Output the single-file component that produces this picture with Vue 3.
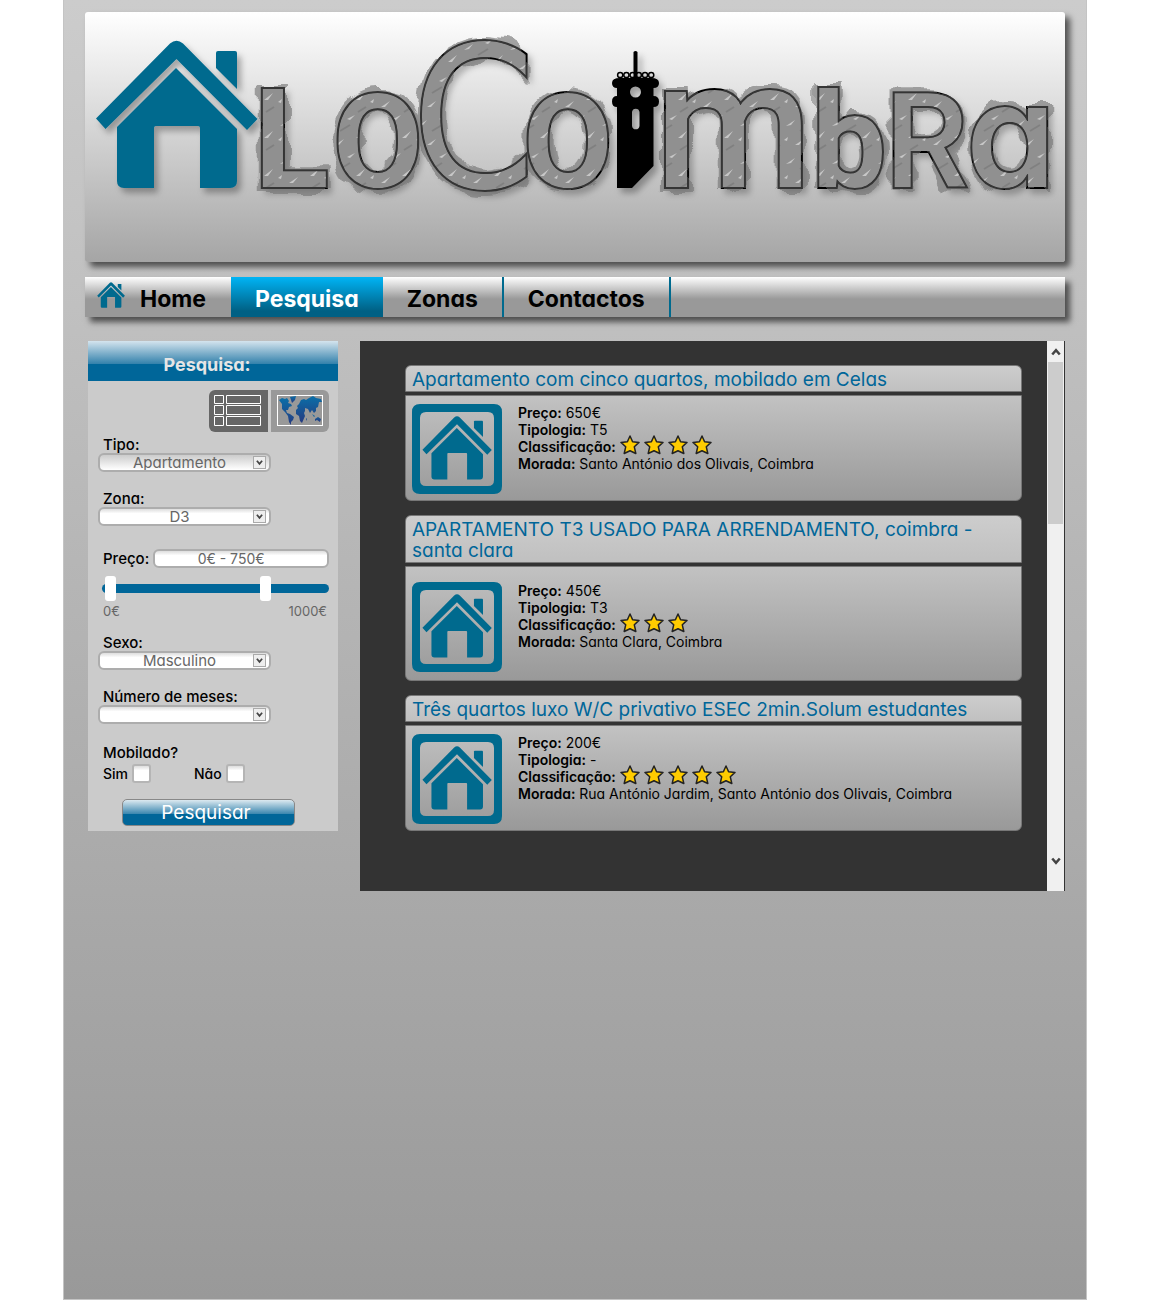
<script setup>
import { ref, computed } from 'vue'

const menu = ['Pesquisa', 'Zonas', 'Contactos']
const view = ref('lista')
const minPrice = ref(0)
const maxPrice = ref(750)
const priceRange = computed(() => `${minPrice.value}€ - ${maxPrice.value}€`)

const letters = [
  { t: 'L', x: 254, cls: 'l-cap' },
  { t: 'O', x: 333, cls: 'l-round' },
  { t: 'C', x: 412, cls: 'l-big' },
  { t: 'O', x: 523, cls: 'l-round' },
  { t: 'm', x: 655, cls: 'l-m' },
  { t: 'b', x: 812, cls: 'l-b' },
  { t: 'R', x: 885, cls: 'l-r' },
  { t: 'a', x: 966, cls: 'l-a' }
]

const results = [
  { title: 'Apartamento com cinco quartos, mobilado em Celas', price: '650€', type: 'T5', stars: 4, address: 'Santo António dos Olivais, Coimbra' },
  { title: 'APARTAMENTO T3 USADO PARA ARRENDAMENTO, coimbra - santa clara', price: '450€', type: 'T3', stars: 3, address: 'Santa Clara, Coimbra', tall: true },
  { title: 'Três quartos luxo W/C privativo ESEC 2min.Solum estudantes', price: '200€', type: '-', stars: 5, address: 'Rua António Jardim, Santo António dos Olivais, Coimbra' }
]
</script>

<template>
  <div class="page">
    <svg class="defs" aria-hidden="true">
      <symbol id="house" viewBox="95 40 163 149">
        <path d="M96 118.500L170 43.500Q176.500 38 183 43.500L257.500 119L247 130L176.500 59L105.500 129Z" />
        <path d="M176 68L237 129V181Q237 188 230 188H200V128Q200 126 198 126H156Q154 126 154 128V188H124Q117 188 117 181V127Z" />
        <path d="M216 53Q216 51 218 51H235Q237 51 237 53V89L216 68Z" />
      </symbol>
      <symbol id="chevron" viewBox="0 0 8 8">
        <path d="M1 2L4 5.500L7 2" fill="none" stroke="#444" stroke-width="2" />
      </symbol>
    </svg>

    <header class="banner">
      <svg class="logo" viewBox="85 12 980 250" role="img" aria-label="LoCoimbra">
        <defs>
          <pattern id="hatch" width="46" height="38" patternUnits="userSpaceOnUse">
            <rect width="46" height="38" fill="#929292" />
            <path d="M4 12L13 6L9 11ZM25 5L33 1L28 6ZM34 24L43 17L38 24ZM13 31L22 25L17 31ZM2 26L6 23L5 27Z" fill="#d0d0d0" />
            <path d="M18 17L28 11M36 36L44 31" stroke="#808080" stroke-width="2" />
          </pattern>
          <filter id="scribble" x="-5%" y="-15%" width="110%" height="135%">
            <feMorphology in="SourceAlpha" operator="dilate" radius="2" result="fat" />
            <feTurbulence type="fractalNoise" baseFrequency="0.06" numOctaves="1" seed="6" result="noise" />
            <feDisplacementMap in="fat" in2="noise" scale="20" xChannelSelector="R" yChannelSelector="G" result="rough" />
            <feFlood flood-color="#777" flood-opacity="0.6" />
            <feComposite in2="rough" operator="in" result="smudge" />
            <feDropShadow in="SourceGraphic" dx="4" dy="5" stdDeviation="3" flood-color="#000" flood-opacity="0.25" result="shadowed" />
            <feFlood flood-color="#888" flood-opacity="0.15" />
            <feComposite in2="rough" operator="in" result="veil" />
            <feMerge>
              <feMergeNode in="smudge" />
              <feMergeNode in="shadowed" />
              <feMergeNode in="veil" />
            </feMerge>
          </filter>
          <filter id="drop" x="-10%" y="-10%" width="125%" height="125%">
            <feDropShadow dx="4" dy="5" stdDeviation="3" flood-color="#000" flood-opacity="0.3" />
          </filter>
        </defs>
        <use class="blue" href="#house" x="95" y="40" width="163" height="149" filter="url(#drop)" />
        <g filter="url(#scribble)">
          <text v-for="(l, i) in letters" :key="i" :x="l.x" y="187" class="letter" :class="l.cls">{{ l.t }}</text>
        </g>
        <g filter="url(#drop)">
          <path d="M633.500 52Q635.500 50 637.500 52V78H651Q659 78 659 83T653.500 88V96Q659 96 659 101.500T653.500 107V166L632 188H617V107Q612 107 612 101.500T617 96V88Q612 88 612 83T620 78H633.500ZM641 92A5.500 5.500 0 1 0 630 92A5.500 5.500 0 1 0 641 92ZM632 112V126A3.800 4 0 0 0 639.500 126V112A3.800 4 0 0 0 632 112Z" fill-rule="evenodd" />
          <circle v-for="n in 6" :key="n" :cx="614 + n * 6.2" cy="75" r="2.600" fill="none" stroke="#000" stroke-width="1.500" />
        </g>
      </svg>
    </header>

    <nav class="menu">
      <a href="#" class="home"><svg class="home-icon blue" aria-hidden="true"><use href="#house" /></svg>Home</a>
      <a v-for="m in menu" :key="m" href="#" :class="{ active: m === 'Pesquisa' }">{{ m }}</a>
    </nav>

    <div class="columns">
      <form class="search" @submit.prevent>
        <h2>Pesquisa:</h2>
        <div class="fields">
          <div class="toggle">
            <button type="button" :class="{ on: view === 'lista' }" aria-label="Lista" @click="view = 'lista'">
              <svg width="48" height="32" viewBox="0 0 48 32" fill="none" stroke="#fff">
                <path d="M.5 .5h9v8h-9zM12.500 .5h34v8h-34zM.5 10.500h9v9h-9zM12.500 10.500h34v9h-34zM.5 21.500h9v9h-9zM12.500 21.500h34v9h-34z" />
              </svg>
            </button>
            <button type="button" :class="{ on: view === 'mapa' }" aria-label="Mapa" @click="view = 'mapa'">
              <svg width="46" height="32" viewBox="0 0 46 32">
                <defs>
                  <linearGradient id="sea" x2="0" y2="1"><stop stop-color="#0a6fa8" /><stop offset="1" stop-color="#263a80" /></linearGradient>
                </defs>
                <rect x=".5" y=".5" width="45" height="30" fill="none" stroke="#fff" />
                <g fill="url(#sea)">
                  <path d="M2 5L5 3L8 4L10 3L12 6L11 8L14 9L15 11L12 12L11 15L9 15L10 18L13 19L17 22L16 25L14 27V30L12 27L11 21L8 17L5 14L5 9Z" />
                  <path d="M13 2L19 1L18 5L15 8L14 5Z" />
                  <path d="M22 9L24 5L27 4L29 5L32 3L36 1L39 3L44 4L45 7L42 7L41 12L39 13L39 16L37 18L35 15L33 18L31 14L28 13L28 16L27 18L28 21L25 28L23 26L22 21L19 19V15L21 13L20 11Z" />
                  <path d="M38 24L41 22L44 24L43 27L40 25L38 26ZM35 19L38 21L37 22ZM29 23L30 24L29 26Z" />
                </g>
              </svg>
            </button>
          </div>

          <div class="field">
            <label for="tipo">Tipo:</label>
            <div class="pick">
              <select id="tipo" class="box shaded"><option>Apartamento</option></select>
              <svg aria-hidden="true"><use href="#chevron" /></svg>
            </div>
          </div>
          <div class="field">
            <label for="zona">Zona:</label>
            <div class="pick">
              <select id="zona" class="box"><option>D3</option></select>
              <svg aria-hidden="true"><use href="#chevron" /></svg>
            </div>
          </div>

          <div class="price">
            <label for="preco">Preço:</label>
            <input id="preco" class="box" type="text" :value="priceRange" readonly>
          </div>
          <div class="slider">
            <input v-model="minPrice" type="range" min="0" max="1000" aria-label="Preço mínimo">
            <input v-model="maxPrice" type="range" min="0" max="1000" aria-label="Preço máximo">
          </div>
          <div class="scale"><span>0€</span><span>1000€</span></div>

          <div class="field">
            <label for="sexo">Sexo:</label>
            <div class="pick">
              <select id="sexo" class="box"><option>Masculino</option></select>
              <svg aria-hidden="true"><use href="#chevron" /></svg>
            </div>
          </div>
          <div class="field">
            <label for="meses">Número de meses:</label>
            <div class="pick">
              <select id="meses" class="box"><option></option></select>
              <svg aria-hidden="true"><use href="#chevron" /></svg>
            </div>
          </div>

          <fieldset class="furnished">
            <legend>Mobilado?</legend>
            <div class="checks">
              <label>Sim <input type="checkbox"></label>
              <label>Não <input type="checkbox"></label>
            </div>
          </fieldset>
          <button class="submit" type="submit">Pesquisar</button>
        </div>
      </form>

      <main class="results">
        <div class="list">
          <article v-for="r in results" :key="r.title" class="card">
            <h3><a href="#">{{ r.title }}</a></h3>
            <div class="body" :class="{ tall: r.tall }">
              <svg class="thumb blue" viewBox="0 0 90 90" aria-hidden="true">
                <path fill-rule="evenodd" d="M8 0H82Q90 0 90 8V82Q90 90 82 90H8Q0 90 0 82V8Q0 0 8 0ZM14 8Q8 8 8 14V76Q8 82 14 82H76Q82 82 82 76V14Q82 8 76 8Z" />
                <use href="#house" x="10" y="12" width="70" height="64" />
              </svg>
              <div class="info">
                <p><b>Preço:</b> {{ r.price }}</p>
                <p><b>Tipologia:</b> {{ r.type }}</p>
                <p class="rating">
                  <b>Classificação:</b>
                  <svg v-for="s in r.stars" :key="s" viewBox="0 0 20 20" aria-hidden="true">
                    <path d="M10 1L12.600 6.800L19 7.400L14.300 11.800L15.800 18.500L10 15.800L4.200 18.500L5.700 11.800L1 7.400L7.400 6.800Z" />
                  </svg>
                </p>
                <p><b>Morada:</b> {{ r.address }}</p>
              </div>
            </div>
          </article>
        </div>
        <div class="scrollbar">
          <button type="button" aria-label="Subir"><svg class="up"><use href="#chevron" /></svg></button>
          <div class="grip"></div>
          <button type="button" class="down" aria-label="Descer"><svg><use href="#chevron" /></svg></button>
        </div>
      </main>
    </div>
  </div>
</template>

<style>
body { background: #fff; }
</style>

<style scoped>
* { box-sizing: border-box; }
.page {
  max-width: 1024px;
  min-height: 100vh;
  margin: 0 auto;
  padding: 12px 21px 0;
  border: solid #c4c4c4;
  border-width: 0 1px 1px;
  background: linear-gradient(#ccc, #999);
  font-family: Inter, "Open Sans", sans-serif;
  font-feature-settings: "cv11";
  font-size: 15px;
  color: #000;
}
.defs { position: absolute; width: 0; height: 0; }
.blue { fill: #006a8e; }
a { color: inherit; text-decoration: none; }
button { padding: 0; border: 0; font: inherit; cursor: pointer; }

.banner {
  border-radius: 3px;
  background: linear-gradient(#fff, #a5a5a5);
  box-shadow: 5px 5px 6px rgba(0, 0, 0, .6);
}
.logo { display: block; width: 100%; height: auto; }
.letter { fill: url(#hatch); stroke: #000; stroke-width: 4px; paint-order: stroke; font-family: Roboto, sans-serif; font-weight: 700; }
.l-cap { font-size: 138px; }
.l-round { font-size: 130px; }
.l-big { font-family: "DejaVu Sans Condensed", "Noto Sans", sans-serif; font-size: 196px; font-weight: 400; }
.l-m { font-size: 180px; font-weight: 500; }
.l-b { font-size: 132px; }
.l-r { font-size: 132px; font-weight: 500; }
.l-a { font-family: Inter, sans-serif; font-size: 144px; font-weight: 600; }

.menu {
  display: flex;
  height: 40px;
  margin-top: 15px;
  background: linear-gradient(#fff, #999 55%);
  box-shadow: 5px 5px 6px rgba(0, 0, 0, .6);
  font-size: 23px;
  font-weight: 700;
}
.menu a {
  display: flex;
  align-items: center;
  padding: 4px 24px 0;
  border-right: 2px solid #006a8e;
}
.menu .home { padding: 4px 25px 0 12px; border: 0; }
.menu .active { border: 0; color: #fff; background: linear-gradient(#00b4f5, #006084 85%); }
.home-icon { width: 28px; height: 26px; margin: 0 15px 8px 0; }

.columns { display: flex; align-items: flex-start; gap: 22px; margin: 24px 0 0 3px; }
.search { flex: 0 0 250px; background: #cbcbcb; }
.search h2 {
  height: 40px;
  margin: 0;
  padding: 4px 12px 0 0;
  background: linear-gradient(#d4e4ee, #3482ac 57%, #006699 57%);
  color: #e5e5e5;
  font-size: 18px;
  line-height: 40px;
  text-align: center;
}
.fields { padding: 9px 9px 5px 10px; }
.toggle { display: flex; gap: 3px; width: 120px; height: 42px; margin: 0 0 3px auto; }
.toggle button { display: grid; flex: 1; place-items: center; background: #999; }
.toggle .on { background: #666; }
.toggle button:first-child { border-radius: 6px 0 0 6px; }
.toggle button:last-child { border-radius: 0 6px 6px 0; }

.field { margin-bottom: 17px; }
.field label, legend { display: block; padding: 2px 0 0 5px; line-height: 16px; font-weight: 500; }
.box {
  display: block;
  width: 100%;
  height: 19px;
  margin: 0;
  padding: 0;
  border: 2px solid #adadad;
  border-radius: 6px;
  appearance: none;
  background: linear-gradient(#ddd, #fff 30%);
  color: #666;
  font: inherit;
  line-height: 15px;
  text-align: center;
}
.shaded { background: linear-gradient(#ccc, #fff); }
.pick { position: relative; width: 173px; }
.pick select { padding-right: 10px; }
.pick svg {
  position: absolute;
  top: 3px;
  right: 5px;
  width: 13px;
  height: 13px;
  padding: 2px;
  border: 1px solid #aaa;
  background: #eee;
  pointer-events: none;
}
.price { display: flex; align-items: center; gap: 4px; padding: 6px 0 0 5px; font-weight: 500; }
.price .box { flex: 1; min-width: 0; padding-right: 20px; font-weight: 400; font-size: 14px; }
.slider { position: relative; height: 25px; margin: 8px 0 2px 4px; }
.slider::before { position: absolute; inset: 8px 0; border-radius: 5px; background: #069; content: ""; }
.slider input {
  position: absolute;
  left: 3px;
  width: calc(100% - 10px);
  height: 25px;
  margin: 0;
  appearance: none;
  background: none;
  pointer-events: none;
}
.slider input::-webkit-slider-thumb {
  width: 11px;
  height: 25px;
  border-radius: 3px;
  appearance: none;
  background: #fff;
  pointer-events: auto;
}
.scale { display: flex; justify-content: space-between; padding: 0 2px 0 5px; margin-bottom: 14px; color: #666; font-size: 13px; line-height: 16px; }
.furnished { margin: 0; padding: 1px 0 0; border: 0; }
.furnished legend { padding-top: 4px; }
.checks { display: flex; gap: 43px; padding: 2px 0 0 5px; font-weight: 500; }
.checks label { display: flex; align-items: center; gap: 4px; font-size: 14px; }
.checks input { width: 19px; height: 19px; margin: 0; appearance: none; border: 2px solid #b5b5b5; border-radius: 3px; background: linear-gradient(#ddd, #fff 30%); }
.submit {
  display: block;
  width: 173px;
  height: 27px;
  margin: 16px 0 0 24px;
  padding-right: 5px;
  border: 1px solid #888;
  border-radius: 5px;
  background: linear-gradient(#dce9f0, #3c88b0 55%, #069 55%);
  color: #fff;
  font-size: 19px;
  line-height: 24px;
}

.results { display: flex; flex: 1; min-width: 0; min-height: 550px; padding-right: 1px; background: #333; }
.list { flex: 1; min-width: 0; padding: 24px 25px 0 45px; }
.card { margin-bottom: 14px; }
.card h3 {
  margin: 0 0 3px;
  padding: 3px 26px 1px 6px;
  border: 1px solid #777;
  border-radius: 6px 6px 0 0;
  background: linear-gradient(#cdcdcd, #c0c0c0);
  color: #006699;
  font-size: 19px;
  font-weight: 400;
  line-height: 21px;
}
.body {
  display: flex;
  gap: 16px;
  padding: 8px 6px 6px;
  border: 1px solid #777;
  border-radius: 0 0 6px 6px;
  background: linear-gradient(#c2c2c2, #999);
}
.tall { padding: 15px 6px 8px; }
.thumb { flex: none; width: 90px; height: 90px; }
.info p { margin: 0; line-height: 17px; font-size: 14px; }
.info b { font-weight: 600; }
.rating { display: flex; align-items: center; gap: 4px; height: 17px; }
.rating svg { flex: none; width: 20px; height: 20px; margin-bottom: 4px; fill: #fc0; stroke: #222; stroke-width: 1.5px; stroke-linejoin: round; }

.scrollbar { display: flex; flex: 0 0 17px; flex-direction: column; padding-bottom: 20px; background: #f0f0f0; }
.scrollbar button { display: grid; height: 21px; place-items: center; background: none; }
.scrollbar svg { width: 10px; height: 10px; }
.scrollbar .up { transform: rotate(180deg); }
.grip { height: 162px; margin: 0 1px; background: #ccc; }
.scrollbar .down { margin-top: auto; }
</style>
